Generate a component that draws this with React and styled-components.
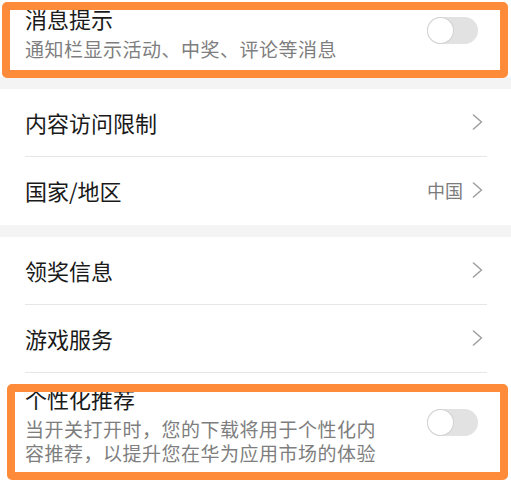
import React from "react";
import styled, { createGlobalStyle } from "styled-components";

const Global = createGlobalStyle`
  html, body { margin: 0; padding: 0; background: #fff; }
  body { font-family: "Noto Sans CJK SC", "Noto Sans", sans-serif; -webkit-font-smoothing: antialiased; }
  * { box-sizing: border-box; }
`;

const Page = styled.div`
  position: relative;
  width: 511px;
  height: 484px;
  overflow: hidden;
  background: #fff;
  display: flex;
  flex-direction: column;
`;

const SwitchRow = styled.div`
  display: flex;
  align-items: center;
  justify-content: space-between;
  padding: ${(p) => p.$pad};
  flex-shrink: 0;
`;

const TextCol = styled.div`
  display: flex;
  flex-direction: column;
  gap: 4px;
  max-width: 362px;
`;

const Title = styled.div`
  font-size: 22px;
  line-height: 30px;
  color: #1a1a1a;
`;

const Sub = styled.div`
  font-size: 19px;
  letter-spacing: 0.5px;
  line-height: 24px;
  color: #7e7e7e;
`;

const Toggle = styled.div`
  width: 51px;
  height: 27px;
  border-radius: 14px;
  background: #e2e2e2;
  position: relative;
  flex-shrink: 0;
  margin-top: ${(p) => p.$shift || 0}px;
  &::before {
    content: "";
    position: absolute;
    left: 1px;
    top: 1px;
    width: 25px;
    height: 25px;
    border-radius: 50%;
    background: #fff;
    box-shadow: 0 0 0 1px #d2d2d2;
  }
`;

const Band = styled.div`
  height: 12px;
  background: #f4f4f4;
  flex-shrink: 0;
`;

const List = styled.div`
  display: flex;
  flex-direction: column;
  flex-shrink: 0;
`;

const NavRow = styled.div`
  height: ${(p) => p.$h || 68}px;
  display: flex;
  align-items: center;
  padding: 0 28px 3px 25px;
  position: relative;
  &::after {
    content: "";
    display: ${(p) => (p.$divider ? "block" : "none")};
    position: absolute;
    left: 25px;
    right: 24px;
    bottom: 0;
    height: 1px;
    background: #e6e6e6;
  }
`;

const Label = styled.div`
  flex: 1;
  font-size: 22px;
  line-height: 30px;
  color: #1a1a1a;
`;

const Value = styled.span`
  font-size: 18px;
  color: #7c7c7c;
  margin-right: 9px;
`;

const Highlight = styled.div`
  position: absolute;
  left: ${(p) => p.$x}px;
  top: ${(p) => p.$y}px;
  width: ${(p) => p.$w}px;
  height: ${(p) => p.$h}px;
  border: 8px solid #fd8b3a;
  border-radius: 5px;
  pointer-events: none;
`;

const Chevron = () => (
  <svg width="11" height="16" viewBox="0 0 11 16" fill="none">
    <path d="M1.5 1 L9.5 8 L1.5 15" stroke="#a0a0a0" strokeWidth="1.6" strokeLinecap="round" strokeLinejoin="round" />
  </svg>
);

export default function App() {
  return (
    <>
      <Global />
      <Page>
        <SwitchRow $pad="3px 33px 16px 25px">
          <TextCol>
            <Title>消息提示</Title>
            <Sub>通知栏显示活动、中奖、评论等消息</Sub>
          </TextCol>
          <Toggle $shift={-3} />
        </SwitchRow>
        <Band />
        <List>
          <NavRow $divider $h={68}>
            <Label>内容访问限制</Label>
            <Chevron />
          </NavRow>
          <NavRow $h={68}>
            <Label>国家/地区</Label>
            <Value>中国</Value>
            <Chevron />
          </NavRow>
        </List>
        <Band />
        <List>
          <NavRow $divider $h={68}>
            <Label>领奖信息</Label>
            <Chevron />
          </NavRow>
          <NavRow $divider $h={68}>
            <Label>游戏服务</Label>
            <Chevron />
          </NavRow>
        </List>
        <SwitchRow $pad="10px 33px 10px 25px">
          <TextCol>
            <Title>个性化推荐</Title>
            <Sub>当开关打开时，您的下载将用于个性化内容推荐，以提升您在华为应用市场的体验</Sub>
          </TextCol>
          <Toggle $shift={-4} />
        </SwitchRow>
        <Highlight $x={2} $y={2} $w={506} $h={76} />
        <Highlight $x={7} $y={384} $w={501} $h={96} />
      </Page>
    </>
  );
}
